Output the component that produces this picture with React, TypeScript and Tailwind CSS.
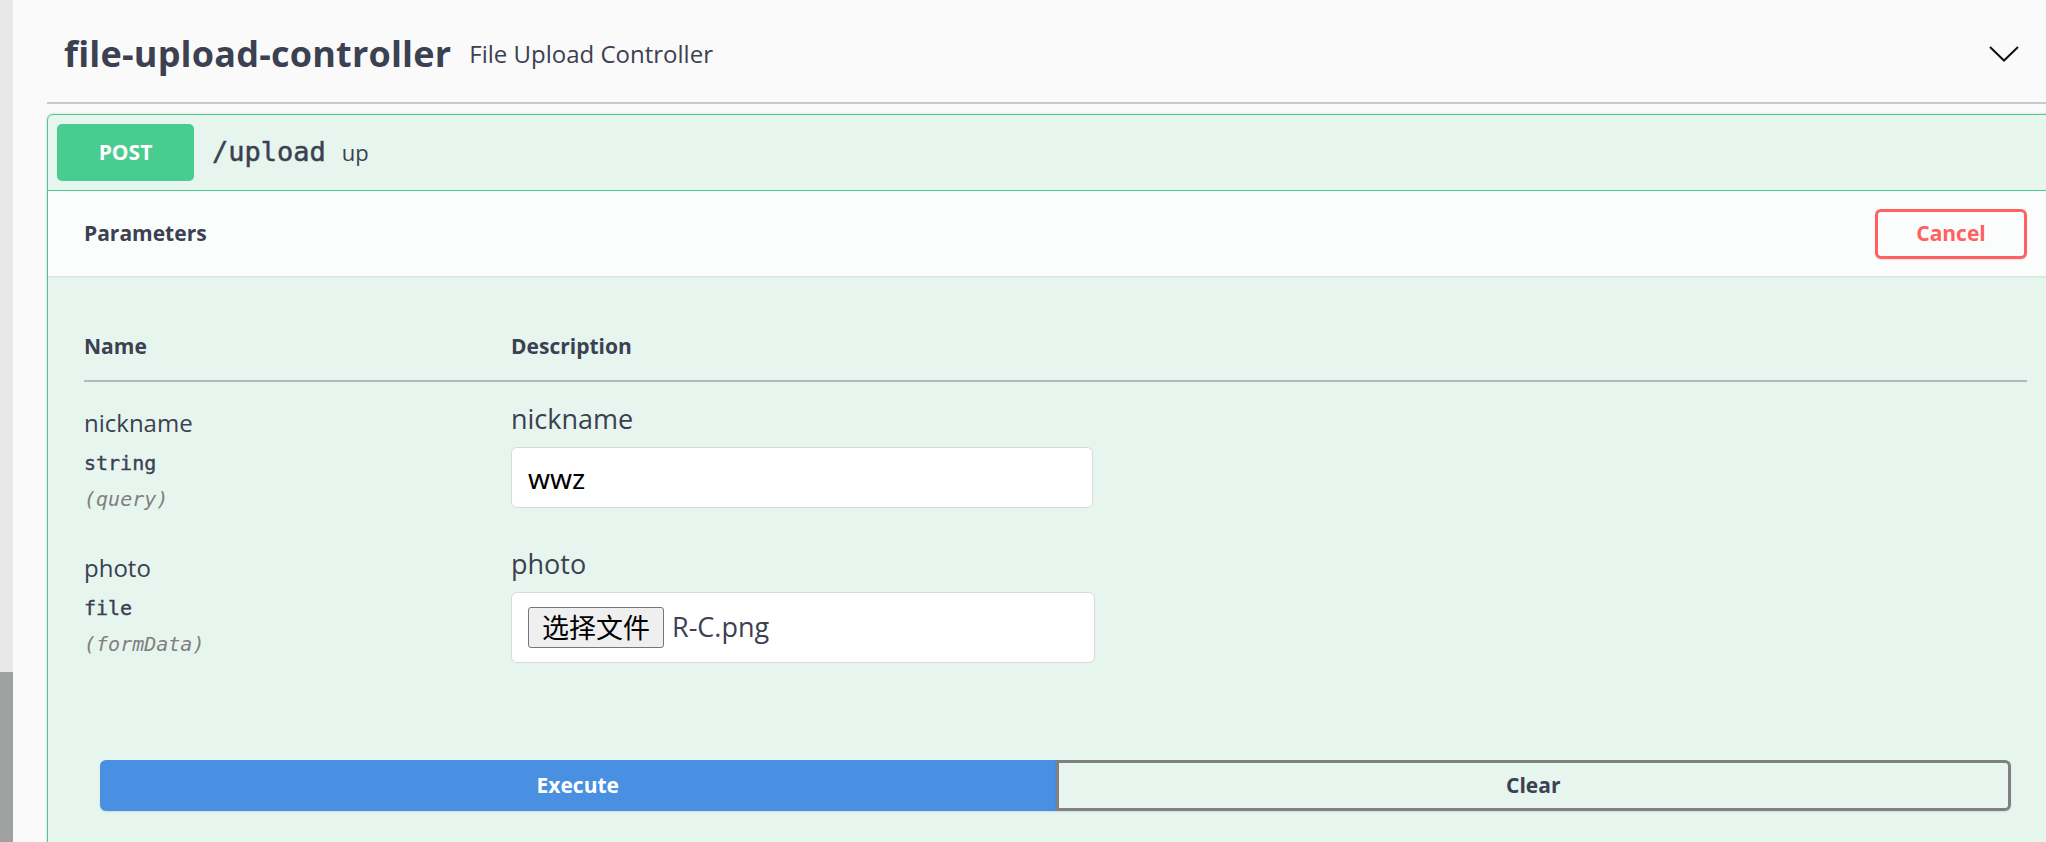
import React from 'react';

const sans = "font-['Open_Sans',sans-serif]";
const mono = "font-['DejaVu_Sans_Mono',monospace]";

interface Param {
    name: string;
    type: string;
    location: string;
}

const ChevronDown = () => (
    <svg width="30" height="16" viewBox="0 0 30 16" fill="none">
        <polyline points="1,1 15,14.5 29,1" stroke="#111" strokeWidth="2" />
    </svg>
);

const ParamRow: React.FC<{ param: Param; children: React.ReactNode }> = ({ param, children }) => (
    <div className="grid grid-cols-[427px_1fr] pb-[10px]">
        <div className="pt-[26px]">
            <div className="text-[24px] leading-[30px]">{param.name}</div>
            <div className={`${mono} mt-[7px] text-[20px] leading-[36px] [-webkit-text-stroke:0.4px]`}>{param.type}</div>
            <div className={`${mono} text-[20px] italic leading-[36px] text-[#808080]`}>({param.location})</div>
        </div>
        <div className="pt-[20px]">
            <div className="text-[27px] leading-[34px]">{param.name}</div>
            {children}
        </div>
    </div>
);

export default function App() {
    return (
        <div className={`flex h-[842px] w-full overflow-hidden bg-[#fafafa] text-[#3b4151] ${sans}`}>
            {/* strip of the neighbouring pane */}
            <div className="flex w-[13px] shrink-0 flex-col">
                <div className="h-[672px] bg-[#e8e8e8]" />
                <div className="flex-1 bg-[#9fa2a2]" />
            </div>

            <div className="ml-[34px] w-[2017px] shrink-0">
                <div className="flex h-[104px] items-center border-b-2 border-[#c8c9ce] pl-[17px] pr-[45px] pt-[5px]">
                    <h3 className="text-[36px] font-bold leading-[44px] tracking-[0.2px]">file-upload-controller</h3>
                    <span className="ml-[18px] text-[24px] leading-[32px]">File Upload Controller</span>
                    <div className="ml-auto flex items-center">
                        <ChevronDown />
                    </div>
                </div>

                <div className="mt-[10px] rounded-[6px] border border-[#49cc90] bg-[#e7f5ef] pb-[40px] shadow-[0_0_3px_rgba(0,0,0,0.19)]">
                    <div className="flex items-center border-b border-[#49cc90] p-[9px]">
                        <span className="flex h-[57px] w-[137px] items-center justify-center rounded-[5px] bg-[#49cc90] text-[21px] font-bold text-white">
                            POST
                        </span>
                        <span className={`${mono} ml-[18px] text-[27px] [-webkit-text-stroke:0.5px]`}>/upload</span>
                        <span className="ml-[16px] text-[22px]">up</span>
                    </div>

                    <div className="flex h-[85px] items-center justify-between bg-white/80 px-[36px] shadow-[0_1px_2px_rgba(0,0,0,0.1)]">
                        <h4 className="text-[21px] font-bold">Parameters</h4>
                        <button className="h-[50px] w-[152px] rounded-[6px] border-[3px] border-[#ff6060] text-[21px] font-bold text-[#ff6060] shadow-[0_1px_2px_rgba(0,0,0,0.1)]">
                            Cancel
                        </button>
                    </div>

                    <div className="px-[36px] pt-[55px]">
                        <div className="grid grid-cols-[427px_1fr] border-b-2 border-[#b3b8ba] pb-[19px] text-[21px] font-bold leading-[30px]">
                            <div>Name</div>
                            <div>Description</div>
                        </div>

                        <ParamRow param={{ name: 'nickname', type: 'string', location: 'query' }}>
                            <div className="mt-[11px] flex h-[61px] w-[582px] items-center rounded-[6px] border-[1.5px] border-[#d9d9d9] bg-white pl-[16px] font-['Noto_Sans',sans-serif] text-[28px] text-black">
                                wwz
                            </div>
                        </ParamRow>

                        <ParamRow param={{ name: 'photo', type: 'file', location: 'formData' }}>
                            <div className="mt-[11px] flex h-[71px] w-[584px] items-center rounded-[6px] border-[1.5px] border-[#d9d9d9] bg-white pl-[16px]">
                                <span className="flex h-[41px] w-[136px] items-center justify-center rounded-[3px] border border-[#767676] bg-[#efefef] font-['Noto_Sans_CJK_SC',sans-serif] text-[27px] text-black">
                                    选择文件
                                </span>
                                <span className="ml-[8px] text-[27px]">R-C.png</span>
                            </div>
                        </ParamRow>

                        <div className="mx-[16px] mt-[87px] flex h-[51px]">
                            <button className="flex-1 rounded-l-[6px] border-[3px] border-[#4990e2] bg-[#4990e2] text-[21px] font-bold text-white shadow-[0_1px_2px_rgba(0,0,0,0.1)]">
                                Execute
                            </button>
                            <button className="flex-1 rounded-r-[6px] border-[3px] border-[#808080] text-[21px] font-bold shadow-[0_1px_2px_rgba(0,0,0,0.1)]">
                                Clear
                            </button>
                        </div>
                    </div>
                </div>
            </div>
        </div>
    );
}
